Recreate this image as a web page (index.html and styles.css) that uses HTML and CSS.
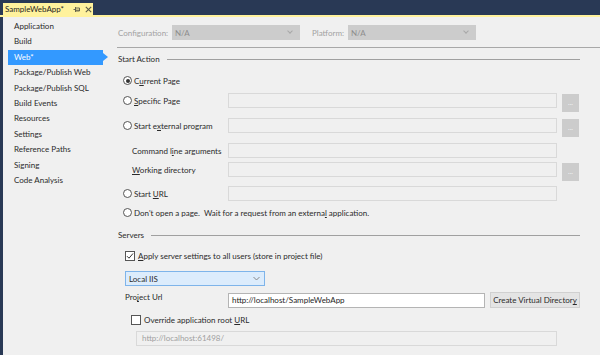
FILE: index.html
```html
<!DOCTYPE html>
<html>
  <head>
    <title>SampleWebApp - Web</title>
    <link rel="stylesheet" href="styles.css">
  </head>
  <body>
    <div class="titlebar">
      <div class="doc-tab">
        <span class="tab-name">SampleWebApp*</span>
        <svg class="pin" width="7" height="7" viewBox="0 0 7 7">
          <path d="M0.5 3.5H2.5M2.5 1V6M2.5 2H6.5V5H2.5M2.5 4.2H6.5" stroke="#5a5a48" stroke-width="0.9" fill="none"/>
        </svg>
        <svg class="close" width="7" height="7" viewBox="0 0 7 7">
          <path d="M0.8 0.8L6.2 6.2M6.2 0.8L0.8 6.2" stroke="#5a5a48" stroke-width="1.1"/>
        </svg>
      </div>
    </div>

    <div class="frame">
      <ul class="nav">
        <li>Application</li>
        <li>Build</li>
        <li class="active">Web*</li>
        <li>Package/Publish Web</li>
        <li>Package/Publish SQL</li>
        <li>Build Events</li>
        <li>Resources</li>
        <li>Settings</li>
        <li>Reference Paths</li>
        <li>Signing</li>
        <li>Code Analysis</li>
      </ul>

      <div class="content">
        <div class="config-row">
          <span class="config-label">Configuration:</span>
          <div class="select disabled config-select">N/A</div>
          <span class="config-label platform">Platform:</span>
          <div class="select disabled config-select">N/A</div>
        </div>
        <div class="rule"></div>

        <div class="pane">
          <div class="section-title start-title"><span>Start Action</span></div>

          <div class="opt-row row-current">
            <span class="radio checked"></span><span class="txt">C<u>u</u>rrent Page</span>
          </div>
          <div class="opt-row row-specific">
            <div class="opt-label"><span class="radio"></span><span class="txt"><u>S</u>pecific Page</span></div>
            <div class="field"></div>
            <div class="browse">...</div>
          </div>
          <div class="opt-row row-external">
            <div class="opt-label"><span class="radio"></span><span class="txt">Start e<u>x</u>ternal program</span></div>
            <div class="field"></div>
            <div class="browse">...</div>
          </div>
          <div class="opt-row row-args">
            <div class="opt-label sub"><span class="txt">Command l<u>i</u>ne arguments</span></div>
            <div class="field"></div>
          </div>
          <div class="opt-row row-workdir">
            <div class="opt-label sub"><span class="txt"><u>W</u>orking directory</span></div>
            <div class="field"></div>
            <div class="browse">...</div>
          </div>
          <div class="opt-row row-url">
            <div class="opt-label"><span class="radio"></span><span class="txt">Start <u>U</u>RL</span></div>
            <div class="field"></div>
          </div>
          <div class="opt-row row-wait">
            <span class="radio"></span><span class="txt">Don't open a page.&nbsp; Wait for a request from an externa<u>l</u> application.</span>
          </div>

          <div class="section-title servers-title"><span>Servers</span></div>

          <div class="check-row row-apply">
            <span class="checkbox checked">
              <svg width="8" height="8" viewBox="0 0 8 8"><path d="M1 4.2L3 6.2L7 1.5" stroke="#333" stroke-width="1" fill="none"/></svg>
            </span>
            <span class="txt"><u>A</u>pply server settings to all users (store in project file)</span>
          </div>

          <div class="select server-select">
            <span>Local IIS</span>
            <svg width="7" height="5" viewBox="0 0 7 5"><path d="M0.5 1L3.5 4L6.5 1" stroke="#888" fill="none"/></svg>
          </div>

          <div class="project-row">
            <span class="project-label">Pro<u>j</u>ect Url</span>
            <div class="field url-field">http://localhost/SampleWebApp</div>
            <div class="button">Create Virtual Director<u>y</u></div>
          </div>

          <div class="check-row row-override">
            <span class="checkbox"></span>
            <span class="txt">Override application root <u>U</u>RL</span>
          </div>

          <div class="field root-field">http://localhost:61498/</div>
        </div>
      </div>
    </div>
  </body>
</html>
```

FILE: styles.css
```css
* {
  box-sizing: border-box;
}

body {
  margin: 0;
  width: 600px;
  height: 355px;
  overflow: hidden;
  background: #f0f0f0;
  font-family: Lato, "Noto Sans", sans-serif;
  font-size: 8px;
  color: #2a2a2a;
}

u {
  text-decoration: underline;
  text-underline-offset: 1px;
}

.txt {
  white-space: nowrap;
}

/* title strip with document tab */
.titlebar {
  height: 17px;
  background: #293955;
  padding: 3px 0 0 3px;
  border-bottom: 2px solid #fff29d;
}

.doc-tab {
  display: flex;
  align-items: center;
  width: 90px;
  height: 12px;
  background: #fff29d;
  padding-left: 2px;
  color: #1e1e1e;
}

.tab-name {
  width: 68px;
  white-space: nowrap;
}

.pin {
  margin-right: 5px;
}

/* main area */
.frame {
  display: flex;
  height: 338px;
  border-left: 3px solid #293955;
}

.nav {
  list-style: none;
  margin: 0;
  padding: 2px 0 0 5px;
  width: 105px;
  flex-shrink: 0;
}

.nav li {
  position: relative;
  height: 15.4px;
  line-height: 15.4px;
  padding-left: 6px;
  width: 95px;
  white-space: nowrap;
}

.nav li.active {
  background: #3399ff;
  color: #fff;
}

.nav li.active::after {
  content: "";
  position: absolute;
  right: -5px;
  top: 3.7px;
  border-left: 5px solid #3399ff;
  border-top: 4px solid transparent;
  border-bottom: 4px solid transparent;
}

.content {
  flex: 1;
  padding-left: 10px;
}

.config-row {
  display: flex;
  align-items: center;
  margin-top: 8px;
  height: 15px;
}

.config-label {
  color: #a2a2a2;
  width: 54px;
  white-space: nowrap;
}

.config-label.platform {
  margin-left: 12px;
  width: 36px;
}

.select {
  display: flex;
  align-items: center;
  height: 15px;
  padding-left: 3px;
}

.select.disabled {
  background: #cccccc;
  color: #8c8c8c;
}

.config-select {
  width: 128px;
  position: relative;
}

.config-select::after {
  content: "";
  position: absolute;
  right: 8px;
  top: 4px;
  width: 3px;
  height: 3px;
  border-right: 1px solid #a8a8a8;
  border-bottom: 1px solid #a8a8a8;
  transform: rotate(45deg);
}

.rule {
  margin: 7px 0 0 -1px;
  height: 1px;
  background: #a8a8a8;
}

.pane {
  padding-right: 20px;
}

.section-title {
  display: flex;
  align-items: center;
  height: 14px;
}

.section-title::after {
  content: "";
  flex: 1;
  height: 1px;
  background: #a0a0a0;
  margin-left: 7px;
}

.start-title {
  margin-top: 4px;
}

.servers-title {
  margin-top: 8px;
}

.opt-row {
  display: flex;
  align-items: flex-start;
  height: 15px;
}

.row-current,
.row-wait {
  align-items: center;
  padding-left: 5px;
}

.opt-label {
  display: flex;
  align-items: center;
  height: 15px;
  width: 110px;
  padding-left: 5px;
}

.opt-label.sub {
  padding-left: 14px;
}

.row-current {
  margin-top: 7px;
}

.row-wait {
  margin-top: 4px;
}

.row-specific {
  margin-top: 5px;
}

.row-external {
  margin-top: 10px;
}

.row-args {
  margin-top: 10px;
}

.row-workdir {
  margin-top: 4px;
}

.row-url {
  margin-top: 9px;
}

.radio {
  display: inline-block;
  flex-shrink: 0;
  width: 9px;
  height: 9px;
  border: 1px solid #555;
  border-radius: 50%;
  background: #fff;
  margin-right: 2px;
  position: relative;
}

.radio.checked::after {
  content: "";
  position: absolute;
  left: 1.5px;
  top: 1.5px;
  width: 4px;
  height: 4px;
  border-radius: 50%;
  background: #333;
}

.field {
  width: 329px;
  height: 15px;
  border: 1px solid #d9d9d9;
  background: #f0f0f0;
}

.browse {
  width: 17px;
  height: 18px;
  margin: 1px 0 0 5px;
  background: #cccccc;
  color: #f4f4f4;
  font-size: 7px;
  text-align: center;
  line-height: 16px;
}

.check-row {
  display: flex;
  align-items: center;
  height: 14px;
}

.checkbox {
  display: inline-flex;
  align-items: center;
  justify-content: center;
  flex-shrink: 0;
  width: 10px;
  height: 10px;
  border: 1px solid #555;
  background: #fff;
  margin-right: 3px;
}

.row-apply {
  margin: 7px 0 0 7px;
}

.server-select {
  margin: 8px 0 0 7px;
  width: 140px;
  background: #dcecfc;
  border: 1px solid #7eb4ea;
  justify-content: space-between;
  padding-right: 4px;
}

.project-row {
  display: flex;
  align-items: flex-start;
  margin: 6px 0 0 7px;
  height: 16px;
}

.project-label {
  width: 103px;
  line-height: 11px;
  white-space: nowrap;
}

.url-field {
  width: 257px;
  height: 15px;
  margin-top: 1px;
  background: #fff;
  border-color: #b4b4b4;
  padding-left: 3px;
  line-height: 13px;
  color: #1e1e1e;
}

.button {
  width: 90px;
  height: 16px;
  margin-left: 5px;
  background: #e4e4e4;
  border: 1px solid #d0d0d0;
  text-align: center;
  line-height: 14px;
  white-space: nowrap;
}

.row-override {
  margin: 5px 0 0 13px;
}

.root-field {
  margin: 4px 0 0 18px;
  width: 421px;
  padding-left: 5px;
  line-height: 13px;
  color: #a0a0a0;
}
```
